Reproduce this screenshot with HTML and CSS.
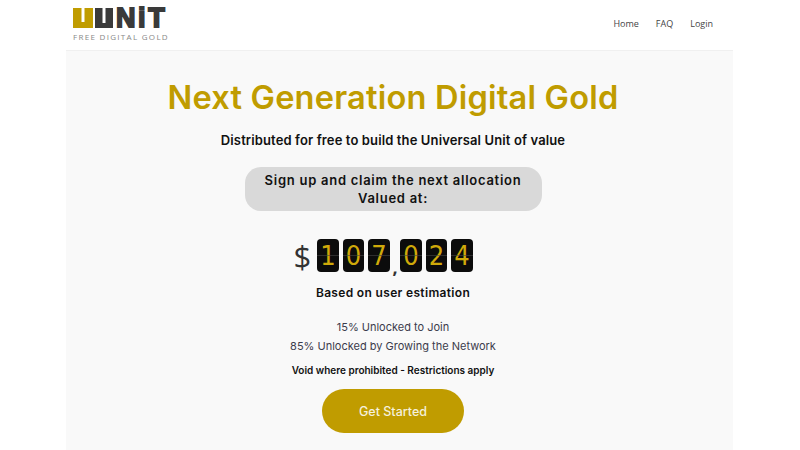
FILE: index.html
```html
<!DOCTYPE html>
<html lang="en">
<head>
    <meta charset="UTF-8">
    <meta name="viewport" content="width=device-width, initial-scale=1.0">
    <title>UUNIT - Free Digital Gold</title>
    <link rel="stylesheet" href="styles.css">
</head>
<body>
    <div class="container">
        <header class="topbar">
            <a class="logo" href="#">
                <span class="logo-row">
                    <svg class="logo-mark" width="41" height="20" viewBox="0 0 41 20">
                        <path fill="#c09c00" d="M0 0h8.5v14h3V0h8.5v20H0z"/>
                        <path fill="#3a3a3a" d="M22 0h7.5v15h3V0h7.5v20H22z"/>
                    </svg>
                    <span class="logo-text">NiT</span>
                </span>
                <span class="logo-tag">FREE DIGITAL GOLD</span>
            </a>
            <nav class="nav">
                <a href="#">Home</a>
                <a href="#">FAQ</a>
                <a href="#">Login</a>
            </nav>
        </header>

        <main class="panel">
            <h1>Next Generation Digital Gold</h1>
            <p class="subtitle">Distributed for free to build the Universal Unit of value</p>

            <div class="claim">
                <p>Sign up and claim the next allocation</p>
                <p>Valued at:</p>
            </div>

            <div class="counter">
                <span class="dollar">$</span>
                <span class="digit">1</span>
                <span class="digit">0</span>
                <span class="digit">7</span>
                <span class="comma">,</span>
                <span class="digit">0</span>
                <span class="digit">2</span>
                <span class="digit">4</span>
            </div>

            <p class="estimate">Based on user estimation</p>

            <p class="unlock">15% Unlocked to Join</p>
            <p class="unlock">85% Unlocked by Growing the Network</p>
            <p class="void">Void where prohibited - Restrictions apply</p>

            <a class="cta" href="#">Get Started</a>
        </main>
    </div>
</body>
</html>
```

FILE: styles.css
```css
* {
    box-sizing: border-box;
}

html, body {
    height: 100%;
}

body {
    margin: 0;
    background-color: #fff;
    font-family: Inter, "Open Sans", sans-serif;
    overflow: hidden;
}

p {
    margin: 0;
}

a {
    text-decoration: none;
}

.container {
    width: 667px;
    margin-left: 66px;
}

.topbar {
    height: 51px;
    display: flex;
    justify-content: space-between;
    align-items: flex-start;
    padding: 0 20px 0 7px;
    border-bottom: 1px solid #f0f0f0;
}

.logo {
    display: flex;
    flex-direction: column;
    padding-top: 8px;
}

.logo-row {
    display: flex;
    gap: 2px;
    height: 20px;
}

.logo-text {
    font-family: "Liberation Sans", sans-serif;
    font-weight: 700;
    font-size: 27px;
    line-height: 20px;
    letter-spacing: 2.6px;
    color: #3a3a3a;
    -webkit-text-stroke: 1.8px currentColor;
}

.logo-tag {
    font-family: "Open Sans", sans-serif;
    font-size: 8px;
    line-height: 8px;
    margin-top: 5px;
    letter-spacing: 1.3px;
    color: #888;
}

.nav {
    display: flex;
    gap: 17px;
    padding-top: 17px;
    font-family: "Open Sans", sans-serif;
    font-size: 9px;
    line-height: 14px;
}

.nav a {
    color: #444;
}

.panel {
    height: 399px;
    background-color: #f9f9f9;
    display: flex;
    flex-direction: column;
    align-items: center;
    padding: 26px 13px 0 0;
}

h1 {
    margin: 0;
    font-size: 32.6px;
    line-height: 40px;
    font-weight: 600;
    letter-spacing: 0.2px;
    color: #c09c00;
}

.subtitle {
    margin-top: 15px;
    font-size: 13px;
    line-height: 16px;
    font-weight: 600;
    letter-spacing: 0.12px;
    color: #111;
}

.claim {
    width: 297px;
    height: 44px;
    margin-top: 19px;
    border-radius: 16px;
    background-color: #d9d9d9;
    text-align: center;
    font-size: 13px;
    line-height: 18px;
    font-weight: 600;
    letter-spacing: 0.73px;
    color: #111;
    padding-top: 4px;
}

.counter {
    display: flex;
    align-items: center;
    height: 33px;
    margin-top: 28px;
    padding-right: 20px;
    gap: 4px;
}

.dollar {
    font-family: "Open Sans", sans-serif;
    font-size: 31px;
    color: #333;
    margin-right: 2px;
}

.digit {
    position: relative;
    width: 21.5px;
    height: 33px;
    border-radius: 4px;
    background-color: #0c0c0c;
    color: #d0aa0a;
    font-family: "DejaVu Sans Condensed", "DejaVu Sans", sans-serif;
    font-stretch: condensed;
    font-size: 27px;
    line-height: 33px;
    text-align: center;
}

/* split line of the flip card */
.digit::after {
    content: "";
    position: absolute;
    left: 0;
    right: 0;
    top: 16px;
    height: 1px;
    background-color: rgba(70, 70, 70, 0.6);
}

.comma {
    align-self: flex-end;
    width: 2.5px;
    margin-left: -1px;
    margin-right: 1px;
    font-family: "Open Sans", sans-serif;
    font-size: 18px;
    font-weight: 700;
    line-height: 14px;
    margin-bottom: -2px;
    color: #333;
}

.estimate {
    margin-top: 13px;
    font-size: 12px;
    line-height: 16px;
    font-weight: 600;
    letter-spacing: 0.33px;
    color: #111;
}

.unlock {
    font-size: 11px;
    line-height: 19px;
    color: #3c3c4c;
}

.estimate + .unlock {
    margin-top: 17px;
}

.void {
    margin-top: 7px;
    font-size: 10px;
    line-height: 14px;
    font-weight: 600;
    color: #111;
}

.cta {
    width: 142px;
    height: 44px;
    margin-top: 12px;
    border-radius: 22px;
    background-color: #c09c00;
    color: #f5f0dc;
    font-size: 12.5px;
    font-weight: 500;
    display: flex;
    align-items: center;
    justify-content: center;
}
```
